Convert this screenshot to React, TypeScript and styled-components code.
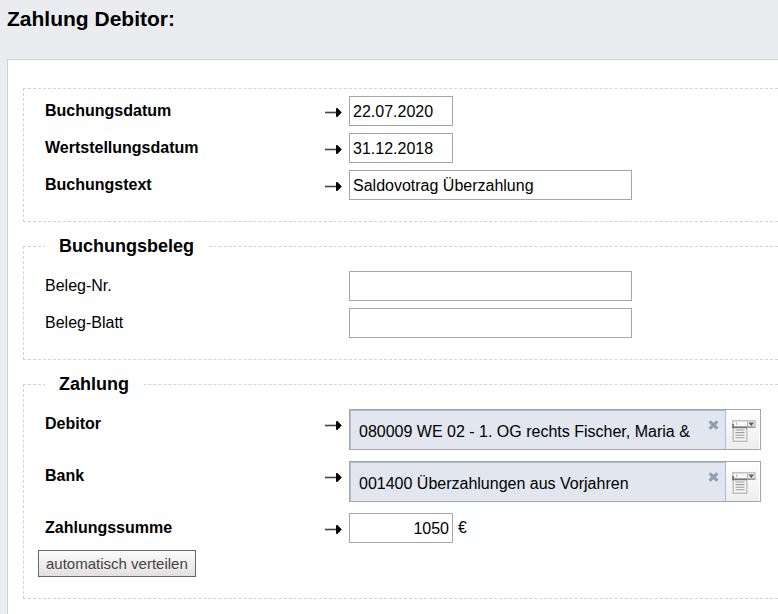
import React, { useId, useState } from "react";
import styled, { createGlobalStyle } from "styled-components";

const GlobalStyle = createGlobalStyle`
  *, *::before, *::after { box-sizing: border-box; }
  html, body { margin: 0; min-height: 100%; }
  body {
    background: #ebecf0;
    color: #000;
    font-family: "Liberation Sans", Arial, Helvetica, sans-serif;
    font-size: 16px;
    line-height: 20px;
  }
`;

const Page = styled.main`
  display: flex;
  flex-direction: column;
  min-height: 100vh;
  padding-left: 7px;
  overflow: hidden;
`;

const Title = styled.h1`
  margin: 0;
  padding: 7px 0 28px;
  font-size: 21px;
  line-height: 24px;
  font-weight: bold;
`;

const Card = styled.form`
  flex: 1;
  display: flex;
  flex-direction: column;
  gap: 12px;
  padding: 28px 0 15px 15px;
  background: #fff;
  border: 1px solid #d0d2d9;
  border-width: 1px 0 0 1px;
`;

const Group = styled.fieldset<{ $titled?: boolean }>`
  min-width: 0;
  margin: 0;
  padding: ${(p) => (p.$titled ? 13 : 7)}px 14px 21px;
  border: 1px dashed #d2d3da;
  border-right: 0;
`;

const Legend = styled.legend`
  margin-left: 7px;
  padding: 0 15px 0 14px;
  font-size: 18px;
  line-height: 24px;
  font-weight: bold;
`;

const Rows = styled.div<{ $loose?: boolean }>`
  display: flex;
  flex-direction: column;
  gap: ${(p) => (p.$loose ? 11 : 7)}px;
  padding-left: 7px;
`;

const Row = styled.div`
  display: flex;
  align-items: flex-start;
`;

const Label = styled.label<{ $required?: boolean }>`
  flex: 0 0 280px;
  line-height: 30px;
  font-weight: ${(p) => (p.$required ? "bold" : "normal")};
`;

const Marker = styled.span`
  flex: 0 0 24px;
  display: flex;
  align-items: center;
  height: 30px;
  padding-top: 3px;
`;

const TextInput = styled.input<{ $short?: boolean; $numeric?: boolean }>`
  flex: 0 1 ${(p) => (p.$short ? 104 : 283)}px;
  width: 0;
  height: 30px;
  margin: 0;
  padding: 1px 3px 0;
  border: 1px solid #a5a6a8;
  border-radius: 0;
  background: #fff;
  color: #000;
  font: inherit;
  text-align: ${(p) => (p.$numeric ? "right" : "left")};
`;

const Unit = styled.span`
  padding-left: 5px;
  line-height: 30px;
`;

const Picker = styled.div`
  flex: 0 1 412px;
  min-width: 0;
  display: flex;
  height: 41px;
  border: 1px solid #a5a6a8;
`;

const Chosen = styled.div`
  flex: 1;
  min-width: 0;
  display: flex;
  align-items: flex-start;
  padding-left: 8px;
  background: #e1e6ef;
  border: 1px solid #b0bad2;
  border-bottom: 0;
`;

const ChosenText = styled.output`
  flex: 1;
  min-width: 0;
  overflow: hidden;
  white-space: nowrap;
  line-height: 41px;
`;

const ClearButton = styled.button`
  flex: none;
  display: flex;
  margin: 0;
  padding: 9px 6px 9px 4px;
  border: 0;
  background: none;
  cursor: pointer;
`;

const ListButton = styled.button`
  flex: 0 0 34px;
  display: flex;
  padding: 10px 0 0 6px;
  border: 0;
  background: linear-gradient(#fff, #ededed);
  box-shadow: inset -1px 0 #fff;
  cursor: pointer;
`;

const ActionButton = styled.button`
  display: block;
  height: 27px;
  margin: 7px 0 0;
  padding: 0 7px;
  border: 1px solid #66676a;
  border-radius: 0;
  background: linear-gradient(#fcfcfc, #e2dfdf);
  color: #444;
  font: inherit;
  font-size: 15px;
  cursor: pointer;
`;

const ArrowIcon = () => (
  <svg width="17" height="11" viewBox="0 0 17 11" aria-hidden="true">
    <path d="M0 5.5H12" stroke="#444" strokeWidth="1.6" />
    <path d="M11 1.2 12.4 1 16.8 5.5 12.4 10 11 9.8Z" fill="#000" />
  </svg>
);

const CrossIcon = () => (
  <svg width="11" height="10" viewBox="0 0 11 10" aria-hidden="true">
    <path d="M1.6 1.4 9.4 8.6M9.4 1.4 1.6 8.6" stroke="#929db5" strokeWidth="3.2" />
  </svg>
);

const ListIcon = () => (
  <svg width="24" height="23" viewBox="0 0 24 23" aria-hidden="true">
    <rect x="1.2" y="7" width="13.6" height="14.3" fill="#f4f4f4" stroke="#bcbcbc" strokeWidth="1.4" />
    <rect x="0.8" y="0.8" width="22.2" height="6.4" fill="#f9f9f9" stroke="#bdbdbd" strokeWidth="1.4" />
    <path d="M16 1.5H22.3V6.5H16Z" fill="#e2e2e2" />
    <path d="M1 4V7.4H15" fill="none" stroke="#747474" strokeWidth="1.8" />
    <path d="M15 7.2H23" stroke="#999" strokeWidth="1.5" />
    <path d="M15.5 1.5V7" stroke="#b4b4b4" />
    <path d="M4.5 2.5V5" stroke="#b4b4b4" />
    <path d="M16.6 2.5H22L19.3 6Z" fill="#5c5c5c" />
    <path d="M3.5 10H12.5M3.5 12.6H12.5M3.5 15.2H12.5M3.5 17.8H12.5" stroke="#9c9c9c" strokeWidth="1.1" />
  </svg>
);

interface FieldProps {
  label: string;
  value?: string;
  required?: boolean;
  short?: boolean;
  numeric?: boolean;
  unit?: string;
}

function Field({ label, value = "", required, short, numeric, unit }: FieldProps) {
  const id = useId();
  return (
    <Row>
      <Label htmlFor={id} $required={required}>{label}</Label>
      <Marker>{required && <ArrowIcon />}</Marker>
      <TextInput id={id} type="text" defaultValue={value} required={required} $short={short} $numeric={numeric} />
      {unit && <Unit>{unit}</Unit>}
    </Row>
  );
}

function PickerField({ label, value }: { label: string; value: string }) {
  const id = useId();
  const [chosen, setChosen] = useState(value);
  return (
    <Row>
      <Label htmlFor={id} $required>{label}</Label>
      <Marker><ArrowIcon /></Marker>
      <Picker>
        <Chosen>
          <ChosenText id={id}>{chosen}</ChosenText>
          <ClearButton type="button" aria-label={`${label} entfernen`} onClick={() => setChosen("")}>
            <CrossIcon />
          </ClearButton>
        </Chosen>
        <ListButton type="button" aria-label={`${label} auswählen`} onClick={() => setChosen(value)}>
          <ListIcon />
        </ListButton>
      </Picker>
    </Row>
  );
}

export default function App() {
  return (
    <>
      <GlobalStyle />
      <Page>
        <Title>Zahlung Debitor:</Title>
        <Card onSubmit={(e: React.FormEvent) => e.preventDefault()}>
          <Group>
            <Rows>
              <Field label="Buchungsdatum" value="22.07.2020" required short />
              <Field label="Wertstellungsdatum" value="31.12.2018" required short />
              <Field label="Buchungstext" value="Saldovotrag Überzahlung" required />
            </Rows>
          </Group>
          <Group $titled>
            <Legend>Buchungsbeleg</Legend>
            <Rows>
              <Field label="Beleg-Nr." />
              <Field label="Beleg-Blatt" />
            </Rows>
          </Group>
          <Group $titled>
            <Legend>Zahlung</Legend>
            <Rows $loose>
              <PickerField label="Debitor" value="080009 WE 02 - 1. OG rechts Fischer, Maria &" />
              <PickerField label="Bank" value="001400 Überzahlungen aus Vorjahren" />
              <Field label="Zahlungssumme" value="1050" required short numeric unit="€" />
            </Rows>
            <ActionButton type="button">automatisch verteilen</ActionButton>
          </Group>
        </Card>
      </Page>
    </>
  );
}
